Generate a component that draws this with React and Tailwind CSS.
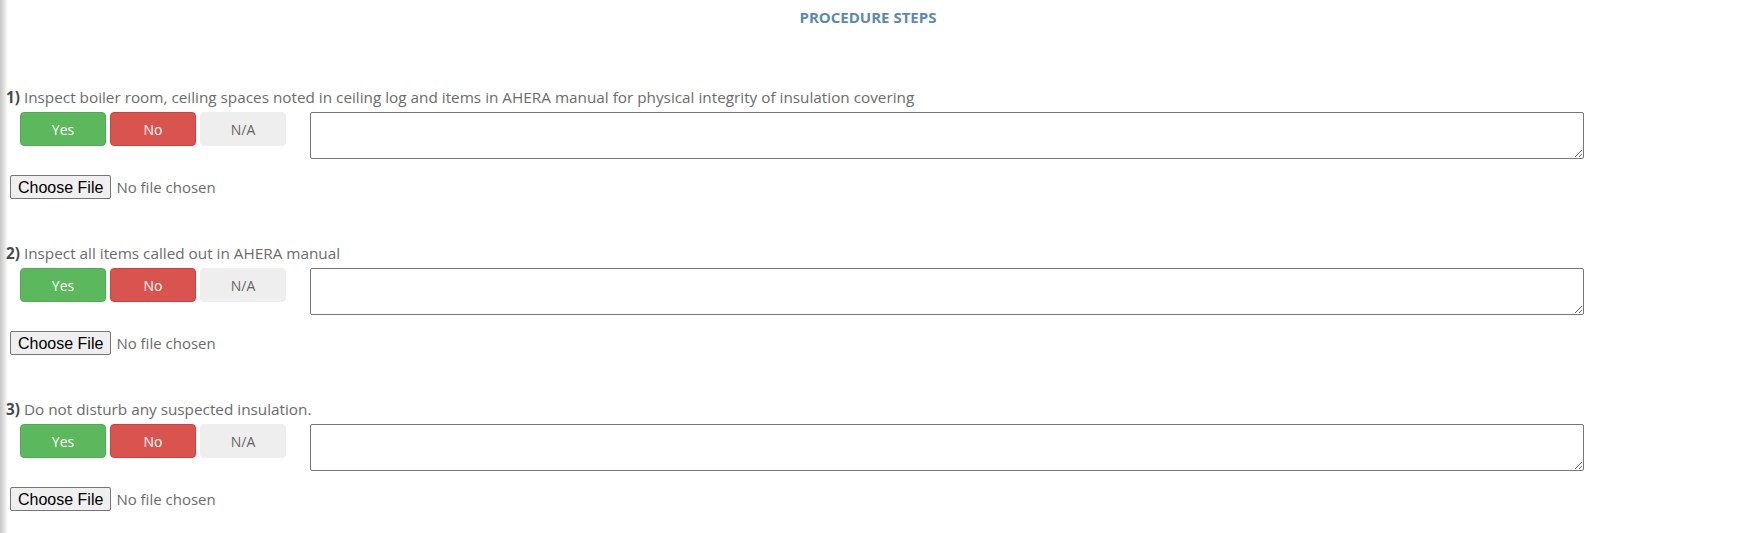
const steps = [
  "Inspect boiler room, ceiling spaces noted in ceiling log and items in AHERA manual for physical integrity of insulation covering",
  "Inspect all items called out in AHERA manual",
  "Do not disturb any suspected insulation.",
];

const Step = ({ num, text }) => (
  <div className="mb-[44px]">
    <div className="h-[20px] leading-[20px] text-[15.3px] text-[#6b6b6b] whitespace-nowrap">
      <span className="font-bold text-[#4a4a4a]">{num})</span> {text}
    </div>

    {/* answer buttons + comment */}
    <div className="flex items-start mt-[5px]">
      <div className="flex gap-[4px] ml-[14px] mr-[24px] text-[14px]">
        <button className="w-[86px] h-[34px] rounded-[4px] border border-[#4cae4c] bg-[#5cb85c] text-white">
          Yes
        </button>
        <button className="w-[86px] h-[34px] rounded-[4px] border border-[#d43f3a] bg-[#d9534f] text-white">
          No
        </button>
        <button className="w-[86px] h-[34px] rounded-[4px] border border-[#eeeeee] bg-[#eeeeee] text-[#666]">
          N/A
        </button>
      </div>
      <textarea className="w-[1274px] h-[47px] border border-[#767676] rounded-[2px] bg-white" />
    </div>

    <div className="flex items-center mt-[16px] ml-[4px]">
      <button
        className="h-[24px] px-[7px] border border-[#767676] rounded-[2px] bg-[#efefef] text-[16px] text-black"
        style={{ fontFamily: '"Liberation Sans", Arial, sans-serif' }}
      >
        Choose File
      </button>
      <span className="ml-[5px] text-[15px] text-[#6b6b6b]">No file chosen</span>
    </div>
  </div>
);

export default function App() {
  return (
    <div
      className="flex w-full h-[533px] bg-white overflow-hidden"
      style={{ fontFamily: '"Open Sans", "Noto Sans", sans-serif' }}
    >
      <div className="w-[8px] shrink-0 bg-gradient-to-r from-[#c4c4c4] to-white" />
      <div className="flex-1 pr-[8px]">
        <div className="pt-[7px] h-[27px] leading-[20px] text-center text-[15px] font-bold text-[#5b88b5] -ml-[8px]">
          PROCEDURE STEPS
        </div>
        <div className="mt-[60px] -ml-[2px]">
          {steps.map((s, i) => (
            <Step key={i} num={i + 1} text={s} />
          ))}
        </div>
      </div>
    </div>
  );
}
